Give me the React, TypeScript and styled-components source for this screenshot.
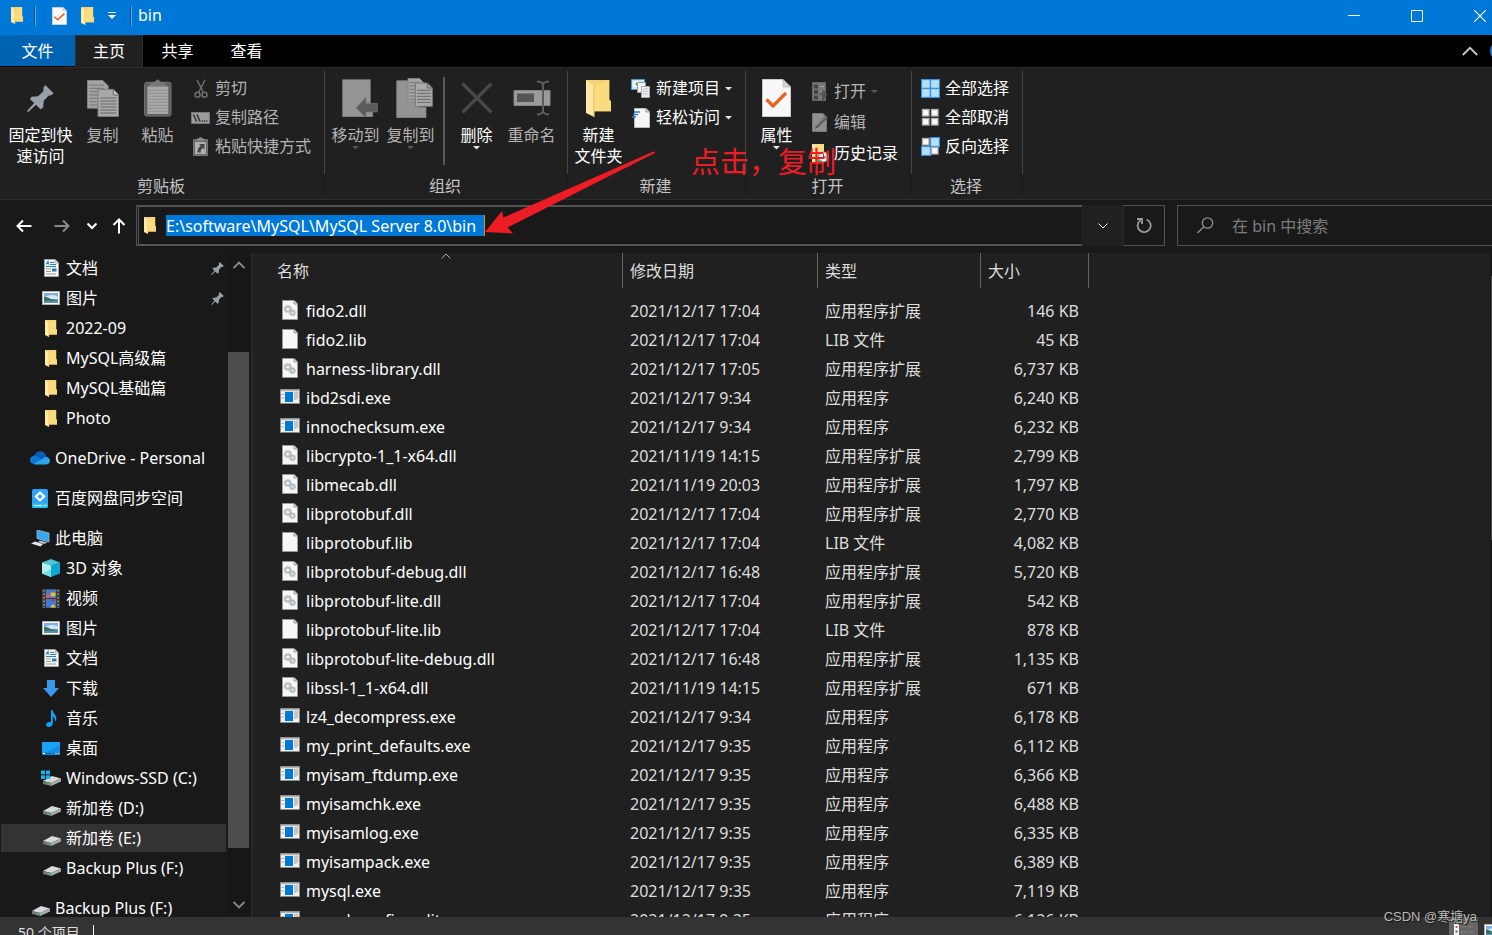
import React from "react";
import styled, { createGlobalStyle, css } from "styled-components";

const GlobalStyle = createGlobalStyle`
  * { box-sizing: border-box; }
  body { margin: 0; background: #191919; overflow: hidden; }
  button, input { font: inherit; color: inherit; background: none; border: 0; padding: 0; margin: 0; }
  a { color: inherit; text-decoration: none; }
  svg { display: block; flex: none; }
`;

const Window = styled.div`
  position: relative;
  display: flex;
  flex-direction: column;
  height: 100vh;
  overflow: hidden;
  color: #fff;
  font-family: "Noto Sans", "Noto Sans CJK SC", sans-serif;
  font-size: 16px;
  line-height: 21px;
`;

/* ---------- title bar ---------- */

const TitleBar = styled.header`
  display: flex;
  align-items: center;
  flex: none;
  height: 35px;
  padding: 0 0 4px 11px;
  background: #0078d7;
`;

const QuickAccess = styled.div`
  display: flex;
  align-items: center;
  gap: 14px;
  margin: 0 14px 0 16px;
`;

const TitleRule = styled.span<{ $gap?: number }>`
  width: 2px;
  height: 20px;
  margin-left: ${(p) => p.$gap ?? 0}px;
  border-left: 1px solid #10508c;
  background: #5aa9e8;
`;

const QuickButton = styled.button`
  display: flex;
`;

const WindowTitle = styled.h1`
  margin: 0 auto 0 6px;
  font-size: 16px;
  font-weight: 400;
`;

const WindowControls = styled.div`
  display: flex;
  margin-right: -19px;
`;

const ControlButton = styled.button`
  display: flex;
  align-items: center;
  justify-content: center;
  width: 63px;
  height: 30px;
`;

/* ---------- ribbon tabs ---------- */

const TabBar = styled.nav`
  display: flex;
  flex: none;
  height: 32px;
  background: #000;
`;

const Tab = styled.button<{ $kind?: "file" | "active" }>`
  width: 69px;
  height: 32px;
  ${(p) =>
    p.$kind === "file" &&
    css`
      width: 75px;
      height: 31px;
      padding-top: 2px;
      background: #0063b1;
    `}
  ${(p) =>
    p.$kind === "active" &&
    css`
      width: 68px;
      background: #202020;
      border: 1px solid #2e2e2e;
      border-bottom: 0;
    `}
`;

const TabBarEnd = styled.div`
  display: flex;
  align-items: center;
  gap: 12px;
  margin: 0 -18px 0 auto;
`;

const HelpButton = styled.button`
  width: 20px;
  height: 20px;
  border-radius: 50%;
  background: #1979ca;
`;

/* ---------- ribbon ---------- */

const Ribbon = styled.section`
  display: flex;
  flex: none;
  height: 133px;
  padding-top: 3px;
  background: #202020;
  border-top: 1px solid #2b2b2b;
  border-bottom: 1px solid #2e2e2e;
`;

const Group = styled.div<{ $width: number }>`
  display: flex;
  flex-direction: column;
  flex: none;
  width: ${(p) => p.$width}px;
`;

const GroupBody = styled.div`
  display: flex;
  height: 103px;
  padding-left: 3px;
  border-right: 1px solid #444;
`;

const GroupLabel = styled.div`
  height: 22px;
  padding: 2px 2px 0 0;
  border-right: 1px solid #1a1a1a;
  color: #c4c4c4;
  text-align: center;
`;

const BigButton = styled.button<{ $dim?: boolean; $wide?: boolean }>`
  display: flex;
  flex-direction: column;
  align-items: center;
  flex: none;
  width: ${(p) => (p.$wide ? 72 : 55)}px;
  padding: 4px 0 0 ${(p) => (p.$wide ? 3 : 0)}px;
  color: ${(p) => (p.$dim ? "#b4b4b4" : "#fff")};
  white-space: pre;
`;

const BigIcon = styled.span`
  display: flex;
  align-items: center;
  justify-content: center;
  height: 46px;
  margin-bottom: 4px;
`;

const GroupRule = styled.span`
  width: 2px;
  height: 88px;
  margin: 6px 4px 0 5px;
  background: #5a5a5a;
`;

const SmallColumn = styled.div<{ $pitch: number; $gap: number }>`
  display: grid;
  grid-auto-rows: ${(p) => p.$pitch}px;
  align-content: start;
  margin-left: ${(p) => p.$gap}px;
  padding-top: ${(p) => (p.$pitch > 29 ? 5 : 3)}px;
`;

const SmallButton = styled.button<{ $dim?: boolean }>`
  display: flex;
  align-items: center;
  gap: 5px;
  color: ${(p) => (p.$dim ? "#b4b4b4" : "#fff")};
  white-space: nowrap;
`;

const SmallIcon = styled.span<{ $width: number }>`
  display: flex;
  justify-content: center;
  width: ${(p) => p.$width}px;
`;

/* ---------- address row ---------- */

const AddressRow = styled.div`
  display: flex;
  align-items: flex-start;
  flex: none;
  height: 53px;
  padding-top: 5px;
`;

const HistoryButtons = styled.div`
  display: grid;
  grid-template-columns: 38px 38px 22px 32px;
  align-items: center;
  width: 136px;
  height: 41px;
  padding-left: 5px;
`;

const IconButton = styled.button`
  display: flex;
  align-items: center;
  justify-content: center;
`;

const AddressBox = styled.label`
  display: flex;
  align-items: center;
  flex: 1;
  gap: 10px;
  height: 41px;
  padding-left: 5px;
  border: 2px solid #535353;
  border-width: 2px 0 2px 3px;
  border-left-style: double;
`;

const AddressInput = styled.input`
  field-sizing: content;
  height: 21px;
  padding: 2px 8px 0 0;
  background: #0078d7;
  border-right: 1px solid #f08a24;
  outline: 0;
`;

const AddressDrop = styled(IconButton)`
  width: 41px;
  height: 41px;
  background: #202020;
`;

const RefreshButton = styled(IconButton)`
  width: 42px;
  height: 41px;
  border: 1px solid #535353;
  border-left-color: #2b2b2b;
`;

const SearchBox = styled.label`
  display: flex;
  align-items: center;
  gap: 18px;
  width: 315px;
  height: 41px;
  margin-left: 12px;
  padding-left: 19px;
  border: 1px solid #535353;
  border-right: 0;
`;

const SearchInput = styled.input`
  flex: 1;
  min-width: 0;
  padding-top: 2px;
  outline: 0;
  &::placeholder { color: #7d7d7d; opacity: 1; }
`;

/* ---------- body ---------- */

const Body = styled.main`
  display: flex;
  flex: 1;
  min-height: 0;
`;

const NavPane = styled.aside`
  display: flex;
  flex: none;
  width: 253px;
  border-right: 2px solid #282828;
  overflow: hidden;
`;

const NavList = styled.nav`
  flex: none;
  width: 228px;
`;

const NavSection = styled.div`
  display: grid;
  grid-auto-rows: 30px;
  margin-bottom: 10px;
`;

const NavLink = styled.a<{ $root?: boolean; $selected?: boolean }>`
  display: flex;
  align-items: center;
  gap: 4px;
  margin: 1px 2px 1px 1px;
  padding: 0 2px 0 ${(p) => (p.$root ? 28 : 39)}px;
  background: ${(p) => (p.$selected ? "#333" : "transparent")};
  white-space: nowrap;
`;

const NavIcon = styled.span`
  display: flex;
  justify-content: center;
  flex: none;
  width: 22px;
`;

const NavText = styled.span`
  flex: 1;
`;

const ScrollTrack = styled.div`
  display: flex;
  flex-direction: column;
  width: 21px;
  background: #171717;
`;

const ScrollThumb = styled.div`
  flex: 1;
  margin: 75px 0 45px;
  background: #4d4d4d;
`;

const ScrollButton = styled(IconButton)`
  height: 24px;
`;

const ListPane = styled.section`
  position: relative;
  flex: 1;
  min-width: 0;
  background: #202020;
  overflow: hidden;
`;

const EdgeTrack = styled.div`
  flex: none;
  width: 2px;
  padding: 23px 0 0 1px;
  background: #171717;
`;

const EdgeThumb = styled.div`
  height: 264px;
  background: #4d4d4d;
`;

const SortMark = styled.span`
  position: absolute;
  top: -2px;
  left: 188px;
`;

const FileTable = styled.table`
  width: 836px;
  table-layout: fixed;
  border-collapse: separate;
  border-spacing: 0;
  color: #dedede;
`;

const HeadCell = styled.th`
  height: 35px;
  padding: 2px 7px 0;
  border-right: 1px solid #636363;
  font-weight: 400;
  text-align: left;
  &:first-child { padding-left: 24px; }
`;

const SpacerCell = styled.td`
  height: 9px;
  padding: 0;
`;

const Cell = styled.td<{ $end?: boolean }>`
  height: 29px;
  padding: 0 10px 0 7px;
  text-align: ${(p) => (p.$end ? "right" : "left")};
  white-space: nowrap;
`;

const NameCell = styled(Cell)`
  padding-left: 26px;
  color: #fff;
`;

const FileName = styled.a`
  display: flex;
  align-items: center;
  gap: 5px;
`;

const FileIcon = styled.span`
  display: flex;
  justify-content: center;
  width: 22px;
  margin-bottom: 4px;
`;

/* ---------- status bar ---------- */

const StatusBar = styled.footer`
  display: flex;
  flex: none;
  height: 18px;
  padding-left: 18px;
  background: #333;
  color: #dedede;
  font-size: 14px;
  overflow: hidden;
`;

const StatusText = styled.span`
  padding: 5px 13px 0 0;
`;

const StatusRule = styled.span`
  width: 1px;
  height: 20px;
  margin-top: 8px;
  background: #fff;
`;

const ViewButtons = styled.div`
  display: flex;
  align-items: flex-start;
  gap: 5px;
  margin: 0 -11px 0 auto;
`;

const ViewButton = styled.button<{ $active?: boolean }>`
  display: flex;
  justify-content: center;
  width: ${(p) => (p.$active ? 29 : 20)}px;
  height: 29px;
  padding-top: 7px;
  background: ${(p) => (p.$active ? "#666" : "none")};
`;

/* ---------- annotations over the window ---------- */

const ArrowMark = styled.svg`
  position: absolute;
  top: 150px;
  left: 485px;
  pointer-events: none;
`;

const NoteText = styled.div`
  position: absolute;
  top: 141px;
  left: 691px;
  color: #ee1c25;
  font-size: 29px;
  line-height: 42px;
  white-space: nowrap;
`;

const Watermark = styled.div`
  position: absolute;
  right: 15px;
  bottom: 8px;
  color: #b9b9b9;
  font-family: "Liberation Sans", "Noto Sans CJK SC", sans-serif;
  font-size: 13px;
  line-height: 20px;
  text-shadow: 1px 1px 1px #111;
`;

/* ---------- icons ---------- */

const Folder = ({ w = 12, h = 17 }: { w?: number; h?: number }) => (
  <svg width={w} height={h} viewBox="0 0 24 36" preserveAspectRatio="none">
    <path d="M0 0H22.500V19L24 21V30.500H6Z" fill="#f6d272" />
    <path d="M8 6 22 0V19L24 21V30.500H8Z" fill="#fadc7f" />
    <path d="M0 0 8 6V36L0 32Z" fill="#ffe9a6" />
    <path d="M7.500 6V36" stroke="#e9c05a" />
  </svg>
);

const CheckPage = ({ w, h }: { w: number; h: number }) => (
  <svg width={w} height={h} viewBox="0 0 29 38" preserveAspectRatio="none">
    <path d="M.5.5H21L28.500 8V37.500H.5Z" fill="#f8f8f8" stroke="#c9c9c9" />
    <path d="M21 .5V8h7.500Z" fill="#d5d5d5" stroke="#aaa" strokeWidth=".6" />
    <path d="M4.500 20.500 11 27 24 14" fill="none" stroke="#f1611b" strokeWidth="3.200" />
  </svg>
);

const Pin = ({ size, color = "#98a1a8" }: { size: number; color?: string }) => (
  <svg width={size} height={size} viewBox="0 0 82 82">
    <path d="M55 0 81 25 72 32 66 32 51 48 49 68 41 74 27 60 4 82 0 79 22 55 9 43 14 36 34 34 50 18 50 8Z" fill={color} />
  </svg>
);

const lines = (x: number, y: number, w: number, n: number, step: number) =>
  Array.from({ length: n }, (_, i) => `M${x} ${y + i * step}h${w}`).join("");

const CopyIcon = () => (
  <svg width="32" height="37" viewBox="0 0 96 111">
    <path d="M1 1H47L64 18V85H1Z" fill="#a3a3a3" stroke="#868686" strokeWidth="2" />
    <path d={lines(7, 15, 44, 7, 10)} stroke="#777" strokeWidth="3" />
    <path d="M33 28H79L95 45V110H33Z" fill="#a9a9a9" stroke="#7b7b7b" strokeWidth="3" />
    <path d="M79 28V45H95" fill="#c0c0c0" stroke="#666" strokeWidth="3" />
    <path d={lines(40, 54, 48, 6, 9)} stroke="#666" strokeWidth="3" />
  </svg>
);

const PasteIcon = () => (
  <svg width="28" height="38" viewBox="0 0 84 114">
    <rect x="2" y="10" width="79" height="101" rx="6" fill="#5d5d5d" stroke="#777" strokeWidth="3" />
    <path d="M10 22H73V105H10Z" fill="#a8a8a8" />
    <path d={lines(12, 34, 59, 8, 9)} stroke="#939393" strokeWidth="3" />
    <path d="M17 22V14L32 8 41 1 50 8 66 14V22Z" fill="#777" />
  </svg>
);

const MoveTo = () => (
  <svg width="44" height="38" viewBox="-24 0 132 114">
    <path d="M2 2H85V78L92 84V113H2Z" fill="#959497" stroke="#858585" strokeWidth="2" />
    <path d="M42 86 72 55V73H106V99H72V117Z" fill="#5c5c5c" stroke="#777" strokeWidth="2" />
  </svg>
);

const CopyTo = () => (
  <svg width="45" height="40" viewBox="-24 0 135 120">
    <path d="M2 8H68V88H90V119H2Z" fill="#949396" stroke="#858585" strokeWidth="2" />
    <path d="M36 1H70L84 15V72H36Z" fill="#a3a3a3" stroke="#858585" strokeWidth="3" />
    <path d={lines(41, 14, 26, 6, 10)} stroke="#777" strokeWidth="3" />
    <path d="M58 15H94L109 30V85H58Z" fill="#aaa" stroke="#777" strokeWidth="3" />
    <path d={"M94 15V30H109" + lines(63, 37, 41, 5, 9)} fill="none" stroke="#666" strokeWidth="3" />
  </svg>
);

const DeleteIcon = () => (
  <svg width="32" height="32" viewBox="0 0 32 32">
    <path d="M1.500 1.500 30.500 30.500M30.500 1.500 1.500 30.500" stroke="#484848" strokeWidth="3.200" />
  </svg>
);

const RenameIcon = () => (
  <svg width="38" height="36" viewBox="0 0 38 36">
    <path d="M1 10.500H37V25.500H1Z" fill="#9b9b9b" stroke="#868686" />
    <path d="M4 13.500H21V22H4Z" fill="#555" />
    <path d="M24 1.500Q28 1.500 30 4Q32 1.500 36 1.500M30 4V32M24 34.500Q28 34.500 30 32Q32 34.500 36 34.500" fill="none" stroke="#5c5c5c" strokeWidth="2" />
  </svg>
);

const Scissors = () => (
  <svg width="14" height="20" viewBox="0 0 14 20" fill="none" stroke="#707070" strokeWidth="1.500">
    <path d="M3 1 9.500 13.500M11 1 4.500 13.500" />
    <circle cx="3.500" cy="15.800" r="2.500" />
    <circle cx="10.500" cy="15.800" r="2.500" />
  </svg>
);

const PathIcon = () => (
  <svg width="19" height="12" viewBox="0 0 19 12">
    <path d="M.5.5H18.500V11.500H.5Z" fill="#9c9c9c" stroke="#777" />
    <path d="M2.500 2.500 5.500 9.500M6 2.500 9 9.500" stroke="#333" strokeWidth="1.600" />
    <path d="M10.500 9H16.500" stroke="#333" strokeWidth="1.500" strokeDasharray="1.500 1" />
  </svg>
);

const ShortcutIcon = () => (
  <svg width="15" height="19" viewBox="0 0 15 19">
    <path d="M.5 2.500H14.500V18.500H.5Z" fill="#676767" stroke="#777" />
    <path d="M2 5H13V17H2Z" fill="#b0b0b0" />
    <path d="M4 4V2L7.500 0 11 2V4Z" fill="#888" />
    <path d="M6 7H11.500V12.500L9.800 10.800Q7.500 12.500 7.500 15.500H4.500Q4.500 11 7.800 8.800Z" fill="#444" />
  </svg>
);

const NewItem = () => (
  <svg width="20" height="20" viewBox="0 0 20 20">
    <path d="M.5.5H13.500V10.500H.5Z" fill="#c8e6f6" stroke="#4b9cc4" />
    <path d="M2.500 2.500H8V8H2.500Z" fill="#fff" />
    <path d="M4 5 6 3V7Z" fill="#4a9a6a" />
    <path d="M6.500 3.500H14.500V13.500H6.500Z" fill="#f5f5f5" stroke="#999" />
    <path d="M10.500 7.500H18.500V18.500H10.500Z" fill="#e8eef8" stroke="#aaa" />
    <path d="M12 10H17M12 12.500H17M12 15H17" stroke="#d7b6c0" />
  </svg>
);

const EasyAccess = () => (
  <svg width="18" height="20" viewBox="0 0 18 20">
    <path d="M2.500.5H14L17.500 4V19.500H2.500Z" fill="#f6f6f6" stroke="#bbb" />
    <path d="M14 .5V4H17.500" fill="#ddd" stroke="#999" />
    <path d="M2 4H8M1 6.500H6M0 9H4" stroke="#2f7fc4" strokeWidth="1.500" />
  </svg>
);

const OpenIcon = () => (
  <svg width="16" height="20" viewBox="0 0 16 20">
    <path d="M.5.5H13.500V18.500H.5Z" fill="#777" stroke="#666" />
    <path d="M2 2.500h4v4H2zM2 8h4v4H2zM2 13.500h4v4H2z" fill="#444" />
    <path d="M8 4.500h4M8 10h2" stroke="#aaa" />
    <path d="M11.500 8 16 13H13.500Q13.500 18 9 19.500Q10.500 16 10 13H7Z" fill="#555" />
  </svg>
);

const EditIcon = () => (
  <svg width="17" height="19" viewBox="0 0 17 19">
    <path d="M.5.5H11L14.500 4V18.500H.5Z" fill="#8f8f8f" stroke="#777" />
    <path d="M3 16 4 12.500 13.500 2.500 16 4.500 6 14.500Z" fill="#555" />
    <path d="M4.500 13 14 3.500" stroke="#aaa" strokeWidth=".8" />
  </svg>
);

const HistoryIcon = () => (
  <svg width="17" height="19" viewBox="0 0 17 19">
    <path d="M0 0H12V18H0Z" fill="#f9dc84" />
    <path d="M0 0 4 3V19L0 17Z" fill="#ffeab0" />
    <circle cx="11.500" cy="13" r="5" fill="#e9eef0" stroke="#8d9499" />
    <path d="M11.500 10V13H14" fill="none" stroke="#555" />
    <path d="M5 14Q6 18 10.500 18" fill="none" stroke="#2fae4e" strokeWidth="2" />
  </svg>
);

const Squares = ({ on }: { on: boolean[] }) => (
  <svg width="19" height="19" viewBox="0 0 19 19">
    {on.map((blue, i) => {
      const x = (i % 2) * 9;
      const y = Math.floor(i / 2) * 9;
      return blue ? (
        <rect key={i} x={x + 0.5} y={y + 0.5} width="9" height="9" fill="#b5dfff" stroke="#3693dd" strokeWidth="1.300" />
      ) : (
        <rect key={i} x={x + 1.500} y={y + 1.500} width="6.500" height="6.500" fill="#fafafa" stroke="#b5b0ae" strokeWidth="1.300" />
      );
    })}
  </svg>
);

const Caret = ({ color = "#e6e6e6" }: { color?: string }) => (
  <svg width="7" height="4" viewBox="0 0 7 4">
    <path d="M0 0H7L3.500 3.500Z" fill={color} />
  </svg>
);

type ChevronProps = { up?: boolean; size?: number; color?: string; stroke?: number };

const Chevron = ({ up, size = 10, color = "#fff", stroke = 1 }: ChevronProps) => (
  <svg width={size} height={size} viewBox="0 0 10 10" fill="none" stroke={color} strokeWidth={stroke}>
    <path d={up ? "M.5 7.500 5 3 9.500 7.500" : "M.5 2.500 5 7 9.500 2.500"} />
  </svg>
);

const Arrow = ({ dir, color = "#fff" }: { dir: "left" | "right" | "up"; color?: string }) => {
  const turn = { left: 0, up: 90, right: 180 }[dir];
  return (
    <svg width="16" height="16" viewBox="0 0 16 16" fill="none" stroke={color} strokeWidth="2">
      <path d="M1.500 8H15.500M7 2.500 1.500 8 7 13.500" transform={`rotate(${turn} 8 8)`} />
    </svg>
  );
};

const DocIcon = () => (
  <svg width="15" height="18" viewBox="0 0 15 18">
    <path d="M.5.5H11L14.500 4V17.500H.5Z" fill="#f8f8f8" stroke="#a5a5a5" />
    <path d="M11 .5V4H14.500" fill="#ddd" stroke="#999" strokeWidth=".7" />
    <path d="M2 5.500 4 2.500 4.500 5.500M6 3.500H10M6 5.500H12M2 7.500H12" fill="none" stroke="#1b84cc" strokeWidth="1.200" />
    <path d="M2 10H7M2 12.500H7M2 15H12" stroke="#999" />
    <path d="M8 9.500H12.500V12.500H8Z" fill="#2f78a8" />
  </svg>
);

const PictureIcon = () => (
  <svg width="18" height="14" viewBox="0 0 18 14">
    <path d="M.5.5H17.500V13.500H.5Z" fill="#fff" stroke="#b5b5b5" />
    <path d="M2 2H16V12H2Z" fill="#7cb2ec" />
    <path d="M5 5Q10 3 16 5.500V8H2V6Z" fill="#d2e8f8" />
    <path d="M2 5.500Q6 6 9 8L16 9V12H2Z" fill="#3d6f66" />
    <path d="M2 10 16 9.500V12H2Z" fill="#5b93a8" />
  </svg>
);

const CloudIcon = () => (
  <svg width="20" height="14" viewBox="0 0 20 14">
    <path d="M4 5Q6 0 10.500.2 15 .5 16 5L18 8 8 11Z" fill="#0a5db5" />
    <path d="M5 13.200Q0 13 0 9Q.5 4.500 5.500 4.500L13 9 10 13Z" fill="#1078d0" />
    <path d="M4 13 13 7.500Q15 5 17 6Q20 7 20 10Q19.500 13.200 16 13.400H5Z" fill="#2aa5ea" />
  </svg>
);

const BaiduIcon = () => (
  <svg width="16" height="19" viewBox="0 0 16 19">
    <rect width="16" height="19" rx="2" fill="#2ba5fb" />
    <path d="M0 14.500H16V17Q16 19 14 19H2Q0 19 0 17Z" fill="#20c7f7" />
    <path d="M2 16.500H10M12 16.500H14" stroke="#fff" />
    <path d="M8 3.500 12 7.500 8 11.500 4 7.500Z" fill="none" stroke="#fff" strokeWidth="2.200" />
    <path d="M3 7.500H5.500M10.500 7.500H13" stroke="#fff" strokeWidth="2" />
    <circle cx="8" cy="7.500" r="1.200" fill="#2ba5fb" />
  </svg>
);

const ComputerIcon = () => (
  <svg width="20" height="17" viewBox="0 0 20 17">
    <path d="M7 0 19 3V12L7 8.500Z" fill="#39a7f0" stroke="#8fb7cf" strokeWidth=".8" />
    <path d="M10 10.500 17.500 12.500 14 14 8 12Z" fill="#b8bfc6" />
    <path d="M1 13.500 5 11.500 13 14 10.500 16.500Z" fill="#e3e6ea" />
  </svg>
);

const CubeIcon = () => (
  <svg width="18" height="18" viewBox="0 0 18 18">
    <path d="M9 0 18 3.500 9 7 0 3.500Z" fill="#4fc5d6" />
    <path d="M0 3.500 9 6.500V18L0 14.500Z" fill="#b4f0ee" />
    <path d="M18 3.500 9 6.500V18L18 14.500Z" fill="#10a7d3" />
    <path d="M0 14.500 9 10V18Z" fill="#77dfe4" />
  </svg>
);

const VideoIcon = () => (
  <svg width="18" height="19" viewBox="0 0 18 19">
    <path d="M0 0H18V19H0Z" fill="#3c3c3c" />
    <path d="M2 1V19M16 1V19" stroke="#858585" strokeWidth="2" strokeDasharray="1.500 2" />
    <path d="M4 .5H14V9H4zM4 10H14V18.500H4z" fill="#3f78d8" />
    <circle cx="11" cy="5" r="2.600" fill="#e4bf33" />
    <path d="M9 3.500Q11 1.500 13.500 3.500Z" fill="#cf3434" />
    <path d="M4 6 7 5 8 9H4Z" fill="#da5d67" />
    <path d="M9 10H14L11.500 13Z" fill="#cf3434" />
    <path d="M8 18.500 11 15 14 18.500Z" fill="#e8c83a" />
  </svg>
);

const DownloadIcon = () => (
  <svg width="16" height="17" viewBox="0 0 16 17">
    <path d="M4 0H12V8H16L8 17 0 8H4Z" fill="#3b97e8" />
  </svg>
);

const MusicIcon = () => (
  <svg width="11" height="17" viewBox="0 0 11 17">
    <path d="M5 0H6.500Q7 3 9.500 5.500Q11.500 8 9 12Q9.500 8 6.800 6.500V13.500Q6.500 16.500 3 17Q0 16.800 0 14.500Q.5 11.500 5 12Z" fill="#12a0f8" />
  </svg>
);

const DesktopIcon = () => (
  <svg width="18" height="13" viewBox="0 0 18 13">
    <path d="M0 0H18V13H0Z" fill="#1ba1f8" />
    <path d="M0 12 18 3V13H0Z" fill="#1190ea" />
    <path d="M1 11.500H13" stroke="#0b5ea8" />
    <path d="M1 11.500H3M13.500 11.500H14.500M16 11.500H17" stroke="#fff" />
  </svg>
);

const DriveIcon = ({ system }: { system?: boolean }) => (
  <svg width="20" height="16" viewBox="0 0 20 16">
    <path d="M2 11 11 6 20 8.500 10 13Z" fill="#d7d9db" />
    <path d="M2 11 10 13V16L2 14Z" fill="#737678" />
    <path d="M10 13 20 8.500V11.500L10 16Z" fill="#a9acae" />
    <path d="M6.500 14H9" stroke="#39d639" strokeWidth="1.500" />
    {system && <path d="M0 .5h4v3.800H0zM5 .5h4v3.800H5zM0 5.300h4V9H0zM5 5.300h4V9H5z" fill="#10b6ee" />}
  </svg>
);

const FilePage = ({ gears }: { gears?: boolean }) => (
  <svg width="16" height="20" viewBox="0 0 16 20">
    <path d="M.5.5H12L15.500 4V19.500H.5Z" fill="#f7f7f7" stroke="#999" />
    <path d="M12 .5V4H15.500" fill="#ddd" stroke="#888" strokeWidth=".8" />
    {gears && (
      <g fill="none" stroke="#b5bdc3" strokeWidth="2">
        <circle cx="5.800" cy="9" r="2.600" />
        <circle cx="10.500" cy="12.800" r="2" />
        <circle cx="5.800" cy="9" r="3.800" strokeWidth=".8" strokeDasharray="1.200 1.200" />
        <circle cx="10.500" cy="12.800" r="3.200" strokeWidth=".8" strokeDasharray="1.200 1.200" />
      </g>
    )}
  </svg>
);

const ExeIcon = () => (
  <svg width="20" height="15" viewBox="0 0 20 15">
    <path d="M.5.5H19.500V14.500H.5Z" fill="#f1f1f1" stroke="#8c8c8c" />
    <path d="M1 1.500H19" stroke="#b3b3b3" strokeWidth="1.500" />
    <path d="M5 3H13V13H5Z" fill="#0078d7" />
    <path d="M1.500 5.500H4M1.500 9H4" stroke="#aaa" />
    <path d="M14 3H18.500V9L16 11H14Z" fill="#c6c6c6" />
  </svg>
);

/* ---------- data ---------- */

type NavEntry = { label: string; icon: React.ReactNode; root?: boolean; pinned?: boolean; selected?: boolean };

const navSections: NavEntry[][] = [
  [
    { label: "文档", icon: <DocIcon />, pinned: true },
    { label: "图片", icon: <PictureIcon />, pinned: true },
    { label: "2022-09", icon: <Folder /> },
    { label: "MySQL高级篇", icon: <Folder /> },
    { label: "MySQL基础篇", icon: <Folder /> },
    { label: "Photo", icon: <Folder /> },
  ],
  [{ label: "OneDrive - Personal", icon: <CloudIcon />, root: true }],
  [{ label: "百度网盘同步空间", icon: <BaiduIcon />, root: true }],
  [
    { label: "此电脑", icon: <ComputerIcon />, root: true },
    { label: "3D 对象", icon: <CubeIcon /> },
    { label: "视频", icon: <VideoIcon /> },
    { label: "图片", icon: <PictureIcon /> },
    { label: "文档", icon: <DocIcon /> },
    { label: "下载", icon: <DownloadIcon /> },
    { label: "音乐", icon: <MusicIcon /> },
    { label: "桌面", icon: <DesktopIcon /> },
    { label: "Windows-SSD (C:)", icon: <DriveIcon system /> },
    { label: "新加卷 (D:)", icon: <DriveIcon /> },
    { label: "新加卷 (E:)", icon: <DriveIcon />, selected: true },
    { label: "Backup Plus (F:)", icon: <DriveIcon /> },
  ],
  [{ label: "Backup Plus (F:)", icon: <DriveIcon />, root: true }],
];

const kinds: Record<string, string> = { dll: "应用程序扩展", lib: "LIB 文件", exe: "应用程序" };

const files: [string, string, string][] = [
  ["fido2.dll", "2021/12/17 17:04", "146"],
  ["fido2.lib", "2021/12/17 17:04", "45"],
  ["harness-library.dll", "2021/12/17 17:05", "6,737"],
  ["ibd2sdi.exe", "2021/12/17 9:34", "6,240"],
  ["innochecksum.exe", "2021/12/17 9:34", "6,232"],
  ["libcrypto-1_1-x64.dll", "2021/11/19 14:15", "2,799"],
  ["libmecab.dll", "2021/11/19 20:03", "1,797"],
  ["libprotobuf.dll", "2021/12/17 17:04", "2,770"],
  ["libprotobuf.lib", "2021/12/17 17:04", "4,082"],
  ["libprotobuf-debug.dll", "2021/12/17 16:48", "5,720"],
  ["libprotobuf-lite.dll", "2021/12/17 17:04", "542"],
  ["libprotobuf-lite.lib", "2021/12/17 17:04", "878"],
  ["libprotobuf-lite-debug.dll", "2021/12/17 16:48", "1,135"],
  ["libssl-1_1-x64.dll", "2021/11/19 14:15", "671"],
  ["lz4_decompress.exe", "2021/12/17 9:34", "6,178"],
  ["my_print_defaults.exe", "2021/12/17 9:35", "6,112"],
  ["myisam_ftdump.exe", "2021/12/17 9:35", "6,366"],
  ["myisamchk.exe", "2021/12/17 9:35", "6,488"],
  ["myisamlog.exe", "2021/12/17 9:35", "6,335"],
  ["myisampack.exe", "2021/12/17 9:35", "6,389"],
  ["mysql.exe", "2021/12/17 9:35", "7,119"],
  ["mysql_config_editor.exe", "2021/12/17 9:35", "6,126"],
];

/* ---------- composed parts ---------- */

type BigProps = { icon: React.ReactNode; label: string; dim?: boolean; wide?: boolean; caret?: string };

const Big = ({ icon, label, dim, wide, caret }: BigProps) => (
  <BigButton $dim={dim} $wide={wide}>
    <BigIcon>{icon}</BigIcon>
    {label}
    {caret && <Caret color={caret} />}
  </BigButton>
);

type SmallProps = { icon: React.ReactNode; label: string; iconWidth: number; dim?: boolean; caret?: string };

const Small = ({ icon, label, iconWidth, dim, caret }: SmallProps) => (
  <SmallButton $dim={dim}>
    <SmallIcon $width={iconWidth}>{icon}</SmallIcon>
    {label}
    {caret && <Caret color={caret} />}
  </SmallButton>
);

export default function App() {
  return (
    <Window>
      <GlobalStyle />
      <TitleBar>
        <Folder w={12} h={17} />
        <TitleRule $gap={11} />
        <QuickAccess>
          <QuickButton aria-label="属性"><CheckPage w={15} h={18} /></QuickButton>
          <QuickButton aria-label="新建文件夹"><Folder w={13} h={18} /></QuickButton>
          <QuickButton aria-label="自定义快速访问工具栏">
            <svg width="8" height="7" viewBox="0 0 8 7">
              <path d="M0 .5H8" stroke="#fff" />
              <path d="M0 3H8L4 7Z" fill="#fff" />
            </svg>
          </QuickButton>
        </QuickAccess>
        <TitleRule />
        <WindowTitle>bin</WindowTitle>
        <WindowControls>
          <ControlButton aria-label="最小化">
            <svg width="12" height="12" viewBox="0 0 12 12"><path d="M0 5.500H12" stroke="#fff" /></svg>
          </ControlButton>
          <ControlButton aria-label="最大化">
            <svg width="12" height="12" viewBox="0 0 12 12"><path d="M.5.5H11.500V11.500H.5Z" fill="none" stroke="#fff" /></svg>
          </ControlButton>
          <ControlButton aria-label="关闭">
            <svg width="12" height="12" viewBox="0 0 12 12"><path d="M0 0 12 12M12 0 0 12" stroke="#fff" strokeWidth="1.200" /></svg>
          </ControlButton>
        </WindowControls>
      </TitleBar>

      <TabBar>
        <Tab $kind="file">文件</Tab>
        <Tab $kind="active">主页</Tab>
        <Tab>共享</Tab>
        <Tab>查看</Tab>
        <TabBarEnd>
          <IconButton aria-label="折叠功能区"><Chevron up size={16} color="#c8c8c8" stroke={1.2} /></IconButton>
          <HelpButton aria-label="帮助" />
        </TabBarEnd>
      </TabBar>

      <Ribbon>
        <Group $width={325}>
          <GroupBody>
            <Big wide icon={<Pin size={27} />} label={"固定到快\n速访问"} />
            <Big dim icon={<CopyIcon />} label="复制" />
            <Big dim icon={<PasteIcon />} label="粘贴" />
            <SmallColumn $pitch={29} $gap={6}>
              <Small dim iconWidth={19} icon={<Scissors />} label="剪切" />
              <Small dim iconWidth={19} icon={<PathIcon />} label="复制路径" />
              <Small dim iconWidth={19} icon={<ShortcutIcon />} label="粘贴快捷方式" />
            </SmallColumn>
          </GroupBody>
          <GroupLabel>剪贴板</GroupLabel>
        </Group>
        <Group $width={243}>
          <GroupBody>
            <Big dim icon={<MoveTo />} label="移动到" caret="#555" />
            <Big dim icon={<CopyTo />} label="复制到" caret="#555" />
            <GroupRule />
            <Big icon={<DeleteIcon />} label="删除" caret="#e6e6e6" />
            <Big dim icon={<RenameIcon />} label="重命名" />
          </GroupBody>
          <GroupLabel>组织</GroupLabel>
        </Group>
        <Group $width={178}>
          <GroupBody>
            <Big icon={<Folder w={25} h={37} />} label={"新建\n文件夹"} />
            <SmallColumn $pitch={29} $gap={5}>
              <Small iconWidth={20} icon={<NewItem />} label="新建项目" caret="#e6e6e6" />
              <Small iconWidth={20} icon={<EasyAccess />} label="轻松访问" caret="#e6e6e6" />
            </SmallColumn>
          </GroupBody>
          <GroupLabel>新建</GroupLabel>
        </Group>
        <Group $width={166}>
          <GroupBody>
            <Big icon={<CheckPage w={29} h={38} />} label="属性" caret="#e6e6e6" />
            <SmallColumn $pitch={31} $gap={7}>
              <Small dim iconWidth={18} icon={<OpenIcon />} label="打开" caret="#555" />
              <Small dim iconWidth={18} icon={<EditIcon />} label="编辑" />
              <Small iconWidth={18} icon={<HistoryIcon />} label="历史记录" />
            </SmallColumn>
          </GroupBody>
          <GroupLabel>打开</GroupLabel>
        </Group>
        <Group $width={111}>
          <GroupBody>
            <SmallColumn $pitch={29} $gap={5}>
              <Small iconWidth={20} icon={<Squares on={[true, true, true, true]} />} label="全部选择" />
              <Small iconWidth={20} icon={<Squares on={[false, false, false, false]} />} label="全部取消" />
              <Small iconWidth={20} icon={<Squares on={[false, true, true, false]} />} label="反向选择" />
            </SmallColumn>
          </GroupBody>
          <GroupLabel>选择</GroupLabel>
        </Group>
      </Ribbon>

      <AddressRow>
        <HistoryButtons>
          <IconButton aria-label="后退"><Arrow dir="left" /></IconButton>
          <IconButton aria-label="前进"><Arrow dir="right" color="#8a8a8a" /></IconButton>
          <IconButton aria-label="最近"><Chevron stroke={2} /></IconButton>
          <IconButton aria-label="上移"><Arrow dir="up" /></IconButton>
        </HistoryButtons>
        <AddressBox aria-label="地址">
          <Folder />
          <AddressInput defaultValue="E:\software\MySQL\MySQL Server 8.0\bin" />
        </AddressBox>
        <AddressDrop aria-label="历史地址"><Chevron /></AddressDrop>
        <RefreshButton aria-label="刷新">
          <svg width="16" height="17" viewBox="0 0 16 17" fill="none" stroke="#9a9a9a" strokeWidth="1.800">
            <path d="M10.500 2.500A6.500 6.500 0 1 1 4.500 3.200" />
            <path d="M1 2H6V7" />
          </svg>
        </RefreshButton>
        <SearchBox aria-label="搜索">
          <svg width="17" height="17" viewBox="0 0 17 17" fill="none" stroke="#8f8f8f" strokeWidth="1.300">
            <circle cx="10.500" cy="6" r="5.200" />
            <path d="M6.800 9.700.5 16" />
          </svg>
          <SearchInput placeholder="在 bin 中搜索" />
        </SearchBox>
      </AddressRow>

      <Body>
        <NavPane>
          <NavList>
            {navSections.map((section, s) => (
              <NavSection key={s}>
                {section.map((item, i) => (
                  <NavLink key={i} href="#" $root={item.root} $selected={item.selected}>
                    <NavIcon>{item.icon}</NavIcon>
                    <NavText>{item.label}</NavText>
                    {item.pinned && <Pin size={13} />}
                  </NavLink>
                ))}
              </NavSection>
            ))}
          </NavList>
          <ScrollTrack>
            <ScrollButton aria-label="向上"><Chevron up size={12} color="#8a8a8a" stroke={1.5} /></ScrollButton>
            <ScrollThumb />
            <ScrollButton aria-label="向下"><Chevron size={12} color="#8a8a8a" stroke={1.5} /></ScrollButton>
          </ScrollTrack>
        </NavPane>

        <ListPane>
          <SortMark><Chevron up color="#aaa" /></SortMark>
          <FileTable>
            <colgroup>
              <col width="370" />
              <col width="195" />
              <col width="163" />
              <col width="108" />
            </colgroup>
            <thead>
              <tr>
                <HeadCell>名称</HeadCell>
                <HeadCell>修改日期</HeadCell>
                <HeadCell>类型</HeadCell>
                <HeadCell>大小</HeadCell>
              </tr>
            </thead>
            <tbody>
              <tr><SpacerCell colSpan={4} /></tr>
              {files.map(([name, date, size]) => {
                const ext = name.slice(-3);
                return (
                  <tr key={name}>
                    <NameCell>
                      <FileName href="#">
                        <FileIcon>{ext === "exe" ? <ExeIcon /> : <FilePage gears={ext === "dll"} />}</FileIcon>
                        {name}
                      </FileName>
                    </NameCell>
                    <Cell>{date}</Cell>
                    <Cell>{kinds[ext]}</Cell>
                    <Cell $end>{size} KB</Cell>
                  </tr>
                );
              })}
            </tbody>
          </FileTable>
        </ListPane>
        <EdgeTrack>
          <EdgeThumb />
        </EdgeTrack>
      </Body>

      <StatusBar>
        <StatusText>50 个项目</StatusText>
        <StatusRule />
        <ViewButtons>
          <ViewButton $active aria-label="详细信息">
            <svg width="20" height="16" viewBox="0 0 20 16">
              <path d="M0 0H5V16H0Z" fill="#f4f4f4" />
              <path d="M1.500 2h2v2h-2zM1.500 11h2v2h-2z" fill="#d0603c" />
              <path d="M1.500 6.500h2v2h-2z" fill="#3a7a4a" />
              <path d="M7 3H12M14 3H19M7 8H12M14 8H19M7 12H12M14 12H19" stroke="#808080" />
            </svg>
          </ViewButton>
          <ViewButton aria-label="大缩略图"><PictureIcon /></ViewButton>
        </ViewButtons>
      </StatusBar>

      <ArrowMark width="172" height="86" viewBox="0 0 172 86">
        <path d="M0 82 17 61 18.500 67.500 169 1.200 170 3 22.500 77.500 28 83.500Z" fill="#ee1c25" />
      </ArrowMark>
      <NoteText>点击，复制</NoteText>
      <Watermark>CSDN @寒塘ya</Watermark>
    </Window>
  );
}
